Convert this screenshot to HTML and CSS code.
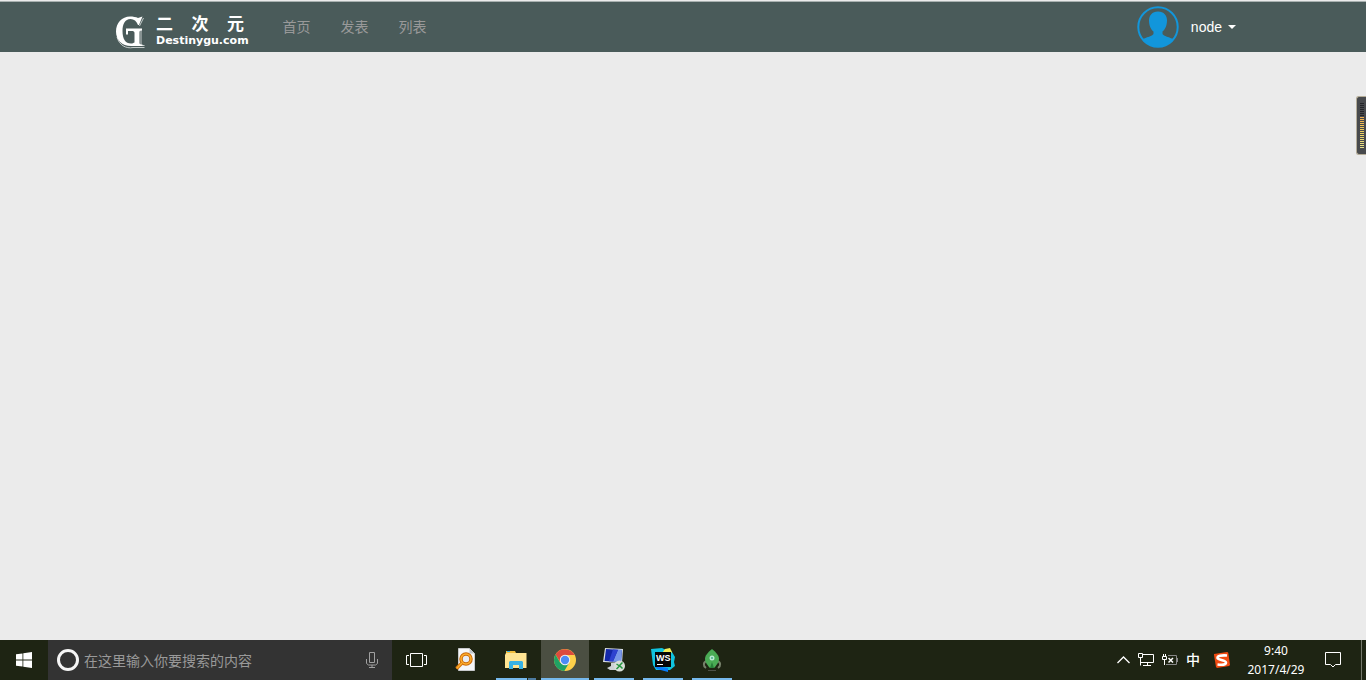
FILE: index.html
```html
<!DOCTYPE html>
<html lang="zh-CN">
<head>
<meta charset="utf-8">
<title>二次元</title>
<link rel="stylesheet" href="styles.css">
</head>
<body>
<header class="navbar">
  <a class="brand" href="#">
    <svg class="brand-mark" viewBox="0 0 32 34" aria-hidden="true">
      <path class="brand-shadow" d="M29.500 3l-4 8M3 22C5 30 12 34 19 32.500h11.500M15 15.500h13M27 16v14.500h3.500"/>
      <path d="M28.500 1.500L25 10h-1C22.500 6 20 4 16.500 4 11 4 8.500 9 8.500 16c0 8 3 12.500 8.500 12.500 1.500 0 2.500-.5 3.500-1V18c0-1.500-1-2-3-2h-3.500v3.500H12V13.500h16V15c-2 0-2.500 1-2.500 2.500V28c0 1 1 1.500 3 1.500V31H17C8 31 2 25 2 16.500 2 8 8 1.500 16 1.500c3 0 6 .5 8 1.500z"/>
    </svg>
    <span class="brand-text">
      <span class="brand-name"><span>二</span><span>次</span><span>元</span></span>
      <span class="brand-domain">Destinygu.com</span>
    </span>
  </a>
  <nav class="links">
    <a href="#">首页</a>
    <a href="#">发表</a>
    <a href="#">列表</a>
  </nav>
  <button class="account" type="button">
    <svg class="avatar" viewBox="0 0 42 42" aria-hidden="true">
      <circle cx="21" cy="21" r="19.7" fill="none" stroke="#1296db" stroke-width="2"/>
      <path fill="#1296db" d="M21 5.500c6 0 9 4 9 9 0 5-2 9-4.500 11v2c0 2 4 3 11 5.500C33 38 27 41 21 41S9 38 5.500 33c7-2.500 11-3.500 11-5.500v-2c-2.500-2-4.500-6-4.500-11 0-5 3-9 9-9z"/>
    </svg>
    <span>node</span>
    <span class="caret"></span>
  </button>
</header>

<main class="page">
  <aside class="meter">
    <span class="meter-idle"></span>
    <span class="meter-level"></span>
  </aside>
</main>

<footer class="taskbar">
  <button class="start" type="button" aria-label="开始">
    <svg width="16" height="16" viewBox="0 0 16 16"><path fill="#fff" d="M0 2.300l6.500-.9v6.100H0zM7.300 1.300L16 0v7.500H7.300zM0 8.500h6.500v6.100L0 13.700zM7.300 8.500H16V16l-8.700-1.300z"/></svg>
  </button>
  <label class="search">
    <span class="cortana"></span>
    <input type="text" placeholder="在这里输入你要搜索的内容" aria-label="搜索">
    <svg width="12" height="18" viewBox="0 0 12 18" fill="none" stroke="#a0a0a0"><path d="M3.500 1.500h5v10h-5zM.5 8v4.500l2 1.500h7l2-1.500V8M6 14v3M3 16.500h6"/></svg>
  </label>
  <div class="apps">
    <button class="app" type="button" aria-label="任务视图">
      <svg width="24" height="14" viewBox="0 0 24 14" fill="none" stroke="#fff"><path d="M4.500.5h12v13h-12zM3 2.500H.5v9H3M18 2.500h2.500v9H18"/></svg>
    </button>
    <button class="app" type="button" aria-label="文件搜索">
      <svg width="24" height="24" viewBox="0 0 24 24"><path fill="#f5f6f8" stroke="#c7c9cc" d="M3.500.5h11l5 5v17h-16z"/><path fill="#bfc4ca" d="M14.500.5v5h5z"/><circle cx="11" cy="11" r="5" fill="#e9edf4" stroke="#c9690b" stroke-width="3.500"/><circle cx="11" cy="11" r="5" fill="none" stroke="#ffae2c" stroke-width="1.500"/><path stroke="#d5720b" stroke-width="3.500" d="M7 15l-5.500 5.500"/><path stroke="#ffb02c" stroke-width="1.500" d="M7 15l-5.500 5.500"/></svg>
    </button>
    <button class="app running grouped" type="button" aria-label="文件资源管理器">
      <svg width="24" height="24" viewBox="0 0 24 24"><path fill="#f2bd3c" d="M2 3h9l1 2h10v4H2z"/><path fill="#39b0e5" d="M3 3h3v1H3z"/><path fill="#ffe493" d="M2 5h20.500v15H1V7z"/><path fill="#38b2e5" d="M5 14l1-1h12l1 1v7h-4v-4H9v4H5z"/></svg>
    </button>
    <button class="app running current" type="button" aria-label="Chrome">
      <svg width="24" height="24" viewBox="0 0 24 24"><circle cx="12" cy="12" r="11" fill="#fdd04a"/><path fill="#dc4b3e" d="M2.500 6.500A11 11 0 0 1 21.600 7H12l-4.600 7.500z"/><path fill="#20a164" d="M2.500 6.500A11 11 0 0 0 11.300 23l5-8.500L12 17l-5-2.500z"/><circle cx="12" cy="12" r="5.200" fill="#f2f2f2"/><circle cx="12" cy="12" r="4.200" fill="#4c8bf5"/></svg>
    </button>
    <button class="app running" type="button" aria-label="远程桌面">
      <svg width="24" height="24" viewBox="0 0 24 24"><path fill="#dadfe3" d="M3 0l18 1-1 14-19-1z"/><path fill="#1428a8" d="M4 1l16 1-1 12-16.500-1z"/><path fill="#7897e8" d="M16 1.700l4 .3-1 12-8-.5z"/><path fill="#2e43d0" d="M11 1.400l5 .3-5 11.800-4-.3z"/><path fill="#cdd2d5" d="M9 15h6v3l3 1v3H8l-3-2 4-2z"/><circle cx="17.500" cy="18" r="5.500" fill="#d8ded8"/><path fill="none" stroke="#259640" stroke-width="1.500" d="M14.500 16l3 2-3 3M20.500 14.500l-3 3 3 3"/></svg>
    </button>
    <button class="app running" type="button" aria-label="WebStorm">
      <svg width="24" height="24" viewBox="0 0 24 24"><path fill="#10c3df" d="M0 1l11-1 4 2 6 2 3 5-1 5 1 4-5 4H5L2 17z"/><path fill="#f4ed58" d="M11 5l3-4 5-1 2 4-2 3z"/><path fill="#087cfa" d="M3 18l14 2v4L6 21z"/><path fill="#050505" d="M4 4h16v15H4z"/><path fill="#fff" d="M6 16h6v1H6z"/><text class="app-letters" x="5" y="13">WS</text></svg>
    </button>
    <button class="app running" type="button" aria-label="加速">
      <svg width="24" height="24" viewBox="0 0 24 24"><path fill="none" stroke="#76806a" stroke-width="2" d="M7 13c-4 1-4 5-1 7M17 13c4 1 4 5 1 7"/><path fill="#4aab55" d="M12 1c5 4 7 7 7 10 0 3-3 7-5 9h-4c-2-2-5-6-5-9 0-3 2-6 7-10z"/><path fill="#277d38" d="M12 14l2 6h-4z"/><circle cx="12" cy="10" r="2.500" fill="#b8e9d2"/><circle cx="12" cy="10" r="1" fill="#4aab8a"/><path stroke="#4d5048" d="M8 22.500h8"/></svg>
    </button>
  </div>
  <div class="tray">
    <svg width="13" height="8" viewBox="0 0 13 8" fill="none" stroke="#fff" stroke-width="1.300"><path d="M.5 7l6-6 6 6"/></svg>
    <svg width="16" height="14" viewBox="0 0 16 14" fill="none" stroke="#fff"><path d="M5 1.500h10.500v8H2.500M.5.500h4v4h-4zM2.500 4.500v8M9.500 9.500v3M5 12.500h8"/></svg>
    <svg width="16" height="12" viewBox="0 0 16 12" fill="none" stroke="#fff"><path stroke="#888" d="M6 1.500h8.500v9H4M15.500 4v4"/><path d="M1.500 0v3M3.500 0v3M.5 2.500h4v3h-4zM2.500 6v5"/><path stroke-width="1.500" d="M6.500 4l4.500 4.500M11 4L6.500 8.500"/></svg>
    <span class="ime">中</span>
    <svg width="16" height="16" viewBox="0 0 16 16"><path fill="#f04b12" d="M0 2l13-2q1 0 1.300 1L16 13l-1 1-12 2-1-1L0 3z"/><path fill="none" stroke="#fff" stroke-width="2.600" d="M13 3.500C7 3 3.500 4 3.500 6S12 8 12 10.500 8 13 3.500 12.500"/></svg>
  </div>
  <time class="clock"><span>9:40</span><span>2017/4/29</span></time>
  <button class="notes" type="button" aria-label="通知">
    <svg width="16" height="16" viewBox="0 0 16 16" fill="none" stroke="#fff"><path d="M.5.500h15v12h-5L8 15l-2.500-2.500h-5z"/></svg>
  </button>
  <button class="desktop" type="button" aria-label="显示桌面"></button>
</footer>
</body>
</html>
```
FILE: styles.css
```css
* { box-sizing: border-box; }

body {
  display: flex;
  flex-direction: column;
  min-height: 100vh;
  margin: 0;
  background: #ebebeb;
  font-family: "Liberation Sans", "Noto Sans CJK SC", sans-serif;
  font-size: 14px;
}

button {
  display: flex;
  align-items: center;
  justify-content: center;
  margin: 0;
  padding: 0;
  border: 0;
  background: none;
  color: inherit;
  font: inherit;
}

a { color: inherit; text-decoration: none; }

svg { flex: none; }

.navbar {
  display: flex;
  align-items: center;
  height: 52px;
  padding: 0 130px 0 114px;
  border-top: 1px solid #ebebeb;
  background: #4a5b5a;
  box-shadow: inset 0 1px #a9b1b0;
}

.brand {
  display: flex;
  align-items: center;
  gap: 10px;
  padding-top: 10px;
  color: #fff;
}

.brand-mark { width: 32px; height: 34px; fill: #fff; }
.brand-shadow { fill: none; stroke: #c5cccb; stroke-width: 1; }

.brand-text { display: flex; flex-direction: column; }

.brand-name {
  display: flex;
  justify-content: space-between;
  width: 88px;
  font-size: 17px;
  font-weight: 700;
  line-height: 18px;
}

.brand-domain {
  font-family: "DejaVu Sans", sans-serif;
  font-size: 11px;
  font-weight: 700;
  line-height: 14px;
}

.links {
  display: flex;
  gap: 30px;
  margin-left: 34px;
  color: #999;
  line-height: 20px;
}

.account { gap: 12px; margin-left: auto; color: #fff; }
.avatar { width: 42px; height: 42px; }

.caret {
  margin-left: -6px;
  border: 4px solid transparent;
  border-top-color: #fff;
  border-bottom: 0;
}

.page { flex: 1; padding-top: 44px; }

.meter {
  display: flex;
  flex-direction: column;
  width: 10px;
  height: 59px;
  margin-left: auto;
  padding: 6px 2px 6px 3px;
  border: 1px solid #b5ad98;
  border-right: 0;
  border-radius: 3px 0 0 3px;
  background: #484a4d;
}

.meter-idle { height: 14px; background: repeating-linear-gradient(#242529 0 1px, #484a4d 1px 2px); }

.meter-level {
  flex: 1;
  background:
    repeating-linear-gradient(transparent 0 1px, #484a4d 1px 2px),
    linear-gradient(#f0ad4e, #ecd060 50%, #e6e08c);
}

.taskbar {
  display: flex;
  height: 40px;
  background: #1e2413;
  color: #fff;
}

.start { width: 48px; }

.search {
  display: flex;
  align-items: center;
  width: 344px;
  padding: 0 14px 0 9px;
  background: #333;
}

.cortana {
  width: 22px;
  height: 22px;
  border: 3px solid #f5f5f5;
  border-radius: 50%;
}

.search input {
  flex: 1;
  min-width: 0;
  padding: 1px 0 0 5px;
  border: 0;
  outline: 0;
  background: none;
  color: #fff;
  font: inherit;
}

.search input::placeholder { color: #999; }

.apps { display: flex; gap: 1px; padding-left: 2px; }
.app { position: relative; width: 48px; }

.running::after {
  content: "";
  position: absolute;
  right: 4px;
  bottom: 0;
  left: 4px;
  height: 2px;
  background: #76b9ed;
}

.grouped::after { background: linear-gradient(90deg, #76b9ed 31px, #1e2413 31px 32px, #4d7ba0 32px); }
.current { background: #4b4f42; }
.current::after { right: 0; left: 0; }

.app-letters {
  fill: #fff;
  font-family: "Liberation Sans", sans-serif;
  font-size: 9px;
  font-weight: 700;
}

.tray {
  display: flex;
  align-items: center;
  gap: 8px;
  margin-left: auto;
}

.ime { margin-right: 6px; font-weight: 500; line-height: 20px; }

.clock {
  display: flex;
  flex-direction: column;
  align-items: center;
  width: 92px;
  padding-top: 1px;
  font-family: "Noto Sans", sans-serif;
  font-size: 12px;
  line-height: 19px;
}

.notes { width: 39px; padding-right: 18px; }
.desktop { width: 5px; border-left: 1px solid #74786b; }
```
